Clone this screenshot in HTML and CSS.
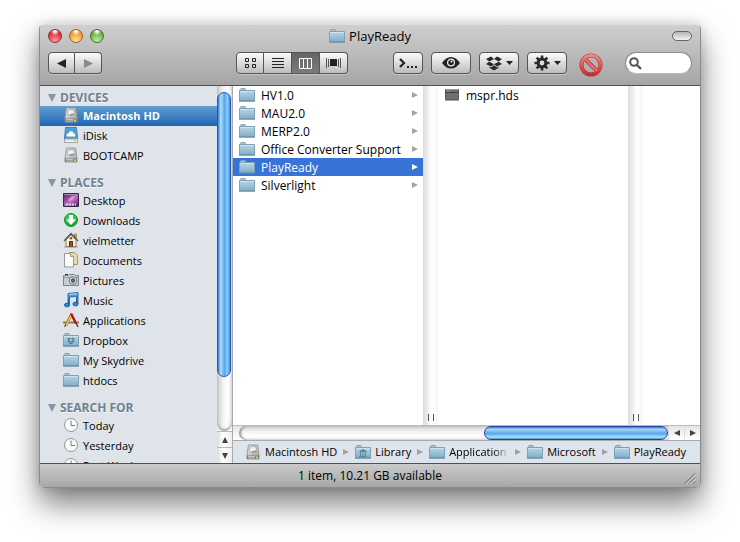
FILE: index.html
```
<!DOCTYPE html>
<html lang="en">
<head>
    <meta charset="UTF-8">
    <meta name="viewport" content="width=device-width, initial-scale=1.0">
    <title>PlayReady</title>
    <link rel="stylesheet" href="styles.css">
</head>
<body>
    <!-- shared icons -->
    <svg class="sprite" aria-hidden="true">
        <defs>
            <linearGradient id="folderFill" x1="0" y1="0" x2="0" y2="1">
                <stop offset="0" stop-color="#bad6e5"/>
                <stop offset="1" stop-color="#80adc6"/>
            </linearGradient>
            <linearGradient id="driveFill" x1="0" y1="0" x2="1" y2="1">
                <stop offset="0" stop-color="#f2f2f2"/>
                <stop offset="1" stop-color="#9b9b9b"/>
            </linearGradient>
            <linearGradient id="deskFill" x1="0" y1="0" x2="1" y2="1">
                <stop offset="0" stop-color="#4a2360"/>
                <stop offset="0.55" stop-color="#c86cc4"/>
                <stop offset="1" stop-color="#43204f"/>
            </linearGradient>
            <linearGradient id="noteFill" x1="0" y1="0" x2="0" y2="1">
                <stop offset="0" stop-color="#56b2f2"/>
                <stop offset="1" stop-color="#1259a8"/>
            </linearGradient>
            <radialGradient id="greenFill" cx="0.5" cy="0.3" r="0.7">
                <stop offset="0" stop-color="#5fe06c"/>
                <stop offset="1" stop-color="#119c2c"/>
            </radialGradient>
            <linearGradient id="redFill" x1="0" y1="0" x2="0" y2="1">
                <stop offset="0" stop-color="#f08a8a"/>
                <stop offset="1" stop-color="#d62a2c"/>
            </linearGradient>
        </defs>
        <symbol id="folder" viewBox="0 0 16 16">
            <path d="M1.500 4V2.500q0-1 1-1h3q1 0 1 1V4z" fill="#a9c9da" stroke="#7d9fb4"/>
            <path d="M.5 3.500h15v10.500H.5z" fill="url(#folderFill)" stroke="#7ba2b9"/>
            <path d="M1 4.500h14" stroke="#cfe3ee"/>
            <path d="M0 14h16" stroke="#5d879f"/>
        </symbol>
        <symbol id="drive" viewBox="0 0 16 16">
            <path d="M3.500 1h9l1.500 10v4H2v-4z" fill="url(#driveFill)" stroke="#9a9a9a"/>
            <path d="M2 11.500h12V15H2z" fill="#7c7c7c"/>
            <ellipse cx="8" cy="5.500" rx="3.800" ry="3.300" fill="#ededed" stroke="#aaa"/>
            <path d="M7 8l4-1" stroke="#777"/>
            <path d="M3 12.500h7M3 14h7" stroke="#c9c9c9"/>
            <path d="M11 13.500h2" stroke="#e3d84d" stroke-width="2"/>
        </symbol>
        <symbol id="idisk" viewBox="0 0 16 16">
            <path d="M2.500.5h11l1 11v4h-13v-4z" fill="#4c9ed5" stroke="#4c7fa6"/>
            <path d="M1.500 12h13v3.500h-13z" fill="#ededed" stroke="#a7a7a7"/>
            <path d="M4 9.500q-1.500-3 1.500-3 .5-3 3.500-2 1.500 0 1.500 2 3 .3 1.500 3z" fill="#fff"/>
            <path d="M11 13.500h2" stroke="#b9c84c"/>
        </symbol>
        <symbol id="desktop" viewBox="0 0 16 16">
            <path d="M.5 1.500h15v13H.5z" fill="url(#deskFill)" stroke="#3b2146"/>
            <path d="M1 2.500h14" stroke="#a98cb2"/>
            <path d="M5 9q2-5 7-5-2 5-7 5" fill="#f5b2ea" opacity=".7"/>
            <path d="M3 12.500h2M6 12.500h2M9 12.500h2M12 12.500h1" stroke="#bfe2fb" stroke-width="2"/>
        </symbol>
        <symbol id="downloads" viewBox="0 0 16 16">
            <circle cx="8" cy="8" r="6.500" fill="url(#greenFill)" stroke="#17902e"/>
            <path d="M6 3h4v4.500h3L8 13 3 7.500h3z" fill="#fff"/>
        </symbol>
        <symbol id="home" viewBox="0 0 16 16">
            <path d="M11.500 2h2v4h-2z" fill="#c79869" stroke="#7c5635" stroke-width=".5"/>
            <path d="M3 8l5-5 5 5v6.500H3z" fill="#f6f1dd" stroke="#8e8468"/>
            <path d="M1 9l7-7.500L15 9" fill="none" stroke="#5d5045" stroke-width="1.200"/>
            <path d="M6.500 9.500h3v5h-3z" fill="#a34a22" stroke="#512b17"/>
            <circle cx="8" cy="6.300" r="1.200" fill="#7a4b32"/>
            <path d="M1.500 15h13" stroke="#848b71"/>
        </symbol>
        <symbol id="documents" viewBox="0 0 16 16">
            <path d="M6.500.5h5l3 3v9h-8z" fill="#e5d9a7" stroke="#a4986e"/>
            <path d="M1.500 1.500h6l3 3v10.500h-9z" fill="#fafafa" stroke="#999"/>
            <path d="M7.500 1.500v3h3" fill="#ddd" stroke="#999"/>
        </symbol>
        <symbol id="pictures" viewBox="0 0 16 16">
            <path d="M.5 3.500h5l1-1h5l1 1h3v10H.5z" fill="#c4ccd2" stroke="#7c868e"/>
            <path d="M1 5.500h14" stroke="#929da5"/>
            <path d="M2 2.500h3" stroke="#333"/>
            <circle cx="10" cy="8.500" r="3.700" fill="#eee" stroke="#6a737b"/>
            <circle cx="10" cy="8.500" r="1.700" fill="#62778c" stroke="#2e3c4a"/>
        </symbol>
        <symbol id="music" viewBox="0 0 16 16">
            <path d="M5 1.500l10-1v11.500h-1.500V4.500l-7 .6V13H5z" fill="url(#noteFill)" stroke="#1a5c9b" stroke-width=".8"/>
            <ellipse cx="4" cy="13" rx="2.600" ry="2" fill="#2f86d2" stroke="#1a5c9b" stroke-width=".8"/>
            <ellipse cx="12.500" cy="12" rx="2.600" ry="2" fill="#2f86d2" stroke="#1a5c9b" stroke-width=".8"/>
            <path d="M6 2.500l8-.7" stroke="#a4d9fa"/>
        </symbol>
        <symbol id="applications" viewBox="0 0 16 16">
            <path d="M0 10.500h16" stroke="#a97746" stroke-width="2"/>
            <path d="M8.500 2L3 13.500" stroke="#8b5d26" stroke-width="2.600"/>
            <path d="M8.500 2.500L3 14" stroke="#f2d24b" stroke-width="1.500"/>
            <path d="M8 1.500l5 10" stroke="#b5121b" stroke-width="2.400"/>
            <path d="M13 11l2 4" stroke="#5a4638" stroke-width="1.500"/>
            <path d="M1 15.500l1-3 1.500 1z" fill="#333"/>
        </symbol>
        <symbol id="boxmark" viewBox="0 0 16 14">
            <path d="M5 0l3 2.500L3.300 5 0 2.600zM11 0l5 2.600L12.700 5 8 2.500zM3.300 5.200L8 7.800 5 10 0 7.600zM12.700 5.200L16 7.600 11 10 8 7.800zM3.300 10.200l1.700.8 3-2.200 3 2.200 1.700-.8v1L8 14l-4.700-2.800z"/>
        </symbol>
        <symbol id="clock" viewBox="0 0 16 16">
            <circle cx="8" cy="8" r="6.500" fill="#fbfbfb" stroke="#969696"/>
            <path d="M8 3.500V8.500h4" fill="none" stroke="#777"/>
        </symbol>
        <symbol id="arrow" viewBox="0 0 6 6">
            <path d="M0 0l6 3-6 3z" fill="currentColor"/>
        </symbol>
    </svg>

    <main class="window">
        <header class="toolbar">
            <div class="titlebar">
                <div class="lights">
                    <button class="light red" aria-label="Close"></button>
                    <button class="light amber" aria-label="Minimize"></button>
                    <button class="light green" aria-label="Zoom"></button>
                </div>
                <h1 class="title"><svg class="icon"><use href="#folder"/></svg>PlayReady</h1>
                <button class="pill" aria-label="Toggle toolbar"></button>
            </div>
            <div class="tools">
                <div class="group nav">
                    <button class="tool" aria-label="Back"><svg width="9" height="9"><path d="M9 0v9L0 4.500z" fill="#222"/></svg></button>
                    <button class="tool" aria-label="Forward"><svg width="9" height="9"><path d="M0 0v9l9-4.500z" fill="#8b8b8b"/></svg></button>
                </div>
                <span class="space wide"></span>
                <div class="group views">
                    <button class="tool" aria-label="Icons"><svg width="12" height="11" fill="none" stroke="#222"><path d="M1.500.5h3v3h-3zM8.500.5h3v3h-3zM1.500 6.500h3v3h-3zM8.500 6.500h3v3h-3z"/></svg></button>
                    <button class="tool" aria-label="List"><svg width="12" height="11" stroke="#222"><path d="M0 .5h12M0 3.500h12M0 6.500h12M0 9.500h12"/></svg></button>
                    <button class="tool on" aria-label="Columns" aria-pressed="true"><svg width="13" height="11" fill="none" stroke="#fff"><path d="M.5.5h12v10H.5zM4.500 0v11M8.500 0v11"/></svg></button>
                    <button class="tool" aria-label="Cover Flow"><svg width="15" height="10"><path d="M4 1h7v7H4z" fill="#222"/><path d="M.5 0v10M2.500 1v8M12.500 1v8M14.500 0v10" stroke="#555"/></svg></button>
                </div>
                <span class="space"></span>
                <div class="actions">
                    <button class="tool terminal" aria-label="Terminal"><svg width="19" height="12"><path d="M1 2l4 4-4 4" fill="none" stroke="#222" stroke-width="2.200"/><path d="M8 9h2v2H8zM12 9h2v2h-2zM16 9h2v2h-2z" fill="#222"/></svg></button>
                    <button class="tool wide" aria-label="Quick Look"><svg width="18" height="12"><path d="M0 6q4-6 9-6t9 6q-4 5.500-9 5.500T0 6z" fill="#222"/><circle cx="9" cy="5.500" r="3.400" fill="none" stroke="#eee" stroke-width="1.200"/><circle cx="9.500" cy="4.500" r="1" fill="#fff"/></svg></button>
                    <button class="tool wide" aria-label="Dropbox"><svg width="16" height="15" fill="#282828"><use href="#boxmark"/></svg><svg width="7" height="4"><path d="M0 0h7L3.500 4z" fill="#222"/></svg></button>
                    <button class="tool wide" aria-label="Action"><svg width="16" height="16" viewBox="-8 -8 16 16"><g fill="none" stroke="#282828"><circle r="3.900" stroke-width="3"/><path d="M0-7.500V-4M0 7.500V4M-7.500 0H-4M7.500 0H4M-5.300-5.300l2.500 2.500M5.300 5.300L2.800 2.800M-5.300 5.300l2.500-2.500M5.300-5.300L2.800-2.800" stroke-width="2.600"/></g></svg><svg width="7" height="4"><path d="M0 0h7L3.500 4z" fill="#222"/></svg></button>
                </div>
                <button class="deny" aria-label="Delete"><svg width="24" height="24"><circle cx="12" cy="12" r="9.500" fill="none" stroke="#a23a3a" stroke-width="4"/><path d="M6 6l12 12" stroke="#a23a3a" stroke-width="4"/><circle cx="12" cy="12" r="9.500" fill="none" stroke="url(#redFill)" stroke-width="2.800"/><path d="M6 6l12 12" stroke="#e96a6b" stroke-width="2.600"/></svg></button>
                <label class="search">
                    <svg width="13" height="13"><circle cx="5" cy="5" r="3.800" fill="none" stroke="#555" stroke-width="2"/><path d="M8 8l4 4" stroke="#555" stroke-width="2.400"/></svg>
                    <input type="text" aria-label="Search">
                </label>
            </div>
        </header>

        <div class="main">
            <nav class="sidebar">
                <section>
                    <button class="heading"><svg width="8" height="8"><path d="M0 0h8L4 8z" fill="#8796a4"/></svg>DEVICES</button>
                    <a class="place selected" href="#"><svg class="icon"><use href="#drive"/></svg>Macintosh HD</a>
                    <a class="place" href="#"><svg class="icon"><use href="#idisk"/></svg>iDisk</a>
                    <a class="place" href="#"><svg class="icon"><use href="#drive"/></svg>BOOTCAMP</a>
                </section>
                <section>
                    <button class="heading"><svg width="8" height="8"><path d="M0 0h8L4 8z" fill="#8796a4"/></svg>PLACES</button>
                    <a class="place" href="#"><svg class="icon"><use href="#desktop"/></svg>Desktop</a>
                    <a class="place" href="#"><svg class="icon"><use href="#downloads"/></svg>Downloads</a>
                    <a class="place" href="#"><svg class="icon"><use href="#home"/></svg>vielmetter</a>
                    <a class="place" href="#"><svg class="icon"><use href="#documents"/></svg>Documents</a>
                    <a class="place" href="#"><svg class="icon"><use href="#pictures"/></svg>Pictures</a>
                    <a class="place" href="#"><svg class="icon"><use href="#music"/></svg>Music</a>
                    <a class="place" href="#"><svg class="icon"><use href="#applications"/></svg>Applications</a>
                    <a class="place" href="#"><svg class="icon" fill="#517f9b"><use href="#folder"/><use href="#boxmark" x="4" y="5" width="8" height="8"/></svg>Dropbox</a>
                    <a class="place" href="#"><svg class="icon"><use href="#folder"/></svg>My Skydrive</a>
                    <a class="place" href="#"><svg class="icon"><use href="#folder"/></svg>htdocs</a>
                </section>
                <section>
                    <button class="heading"><svg width="8" height="8"><path d="M0 0h8L4 8z" fill="#8796a4"/></svg>SEARCH FOR</button>
                    <a class="place" href="#"><svg class="icon"><use href="#clock"/></svg>Today</a>
                    <a class="place" href="#"><svg class="icon"><use href="#clock"/></svg>Yesterday</a>
                    <a class="place" href="#"><svg class="icon"><use href="#clock"/></svg>Past Week</a>
                </section>
            </nav>

            <div class="scroll-y">
                <div class="track"><div class="thumb"></div></div>
                <button class="step" aria-label="Scroll up"><svg width="6" height="6"><path d="M0 6h6L3 0z" fill="#444"/></svg></button>
                <button class="step" aria-label="Scroll down"><svg width="6" height="6"><path d="M0 0h6L3 6z" fill="#444"/></svg></button>
            </div>

            <div class="browser">
                <div class="columns">
                    <div class="column">
                        <a class="file" href="#"><svg class="icon"><use href="#folder"/></svg><span class="name">HV1.0</span><svg class="more"><use href="#arrow"/></svg></a>
                        <a class="file" href="#"><svg class="icon"><use href="#folder"/></svg><span class="name">MAU2.0</span><svg class="more"><use href="#arrow"/></svg></a>
                        <a class="file" href="#"><svg class="icon"><use href="#folder"/></svg><span class="name">MERP2.0</span><svg class="more"><use href="#arrow"/></svg></a>
                        <a class="file" href="#"><svg class="icon"><use href="#folder"/></svg><span class="name">Office Converter Support</span><svg class="more"><use href="#arrow"/></svg></a>
                        <a class="file selected" href="#"><svg class="icon"><use href="#folder"/></svg><span class="name">PlayReady</span><svg class="more"><use href="#arrow"/></svg></a>
                        <a class="file" href="#"><svg class="icon"><use href="#folder"/></svg><span class="name">Silverlight</span><svg class="more"><use href="#arrow"/></svg></a>
                    </div>
                    <div class="divider"></div>
                    <div class="column">
                        <a class="file" href="#"><svg class="icon" viewBox="0 0 16 16"><path d="M1.500 2.500h13v10h-13z" fill="#707070" stroke="#5a5a5a"/><path d="M1 5.500h14" stroke="#404040"/><path d="M2 2.500h12" stroke="#999"/><path d="M3 4h2" stroke="#7bc47b"/><path d="M1 13.500h14" stroke="#aaa"/></svg><span class="name">mspr.hds</span></a>
                    </div>
                    <div class="divider"></div>
                    <div class="rest"></div>
                </div>
                <div class="scroll-x">
                    <div class="track"><div class="thumb"></div></div>
                    <button class="step" aria-label="Scroll left"><svg width="6" height="6"><path d="M6 0v6L0 3z" fill="#444"/></svg></button>
                    <button class="step" aria-label="Scroll right"><svg width="6" height="6"><path d="M0 0v6l6-3z" fill="#444"/></svg></button>
                </div>
                <nav class="path">
                    <a href="#"><svg class="icon"><use href="#drive"/></svg>Macintosh HD</a>
                    <svg class="more"><use href="#arrow"/></svg>
                    <a href="#"><svg class="icon" viewBox="0 0 16 16"><use href="#folder"/><path d="M4.500 7.500l3.500-2 3.500 2zM4 12.500h8M5.500 8v4M8 8v4M10.500 8v4" fill="#5b89a4" stroke="#5b89a4"/></svg>Library</a>
                    <svg class="more"><use href="#arrow"/></svg>
                    <a href="#"><svg class="icon"><use href="#folder"/></svg><span class="cut">Application</span></a>
                    <svg class="more"><use href="#arrow"/></svg>
                    <a href="#"><svg class="icon"><use href="#folder"/></svg>Microsoft</a>
                    <svg class="more"><use href="#arrow"/></svg>
                    <a href="#"><svg class="icon"><use href="#folder"/></svg>PlayReady</a>
                </nav>
            </div>
        </div>

        <footer class="status">
            <span>1 item, 10.21 GB available</span>
            <svg class="grip" width="12" height="12"><path d="M1 11.500L11 1.500M5 11.500l6-6M9 11.500l2-2" stroke="#666"/><path d="M2 12.500l10-10M6 12.500l6-6" stroke="#ddd"/></svg>
        </footer>
    </main>
</body>
</html>
```
FILE: styles.css
```
* {
    box-sizing: border-box;
}
body {
    margin: 0;
    padding: 24px 39px 54px;
    height: 100vh;
    display: flex;
    background: #fff;
    font-family: "Open Sans", "Noto Sans", sans-serif;
    font-size: 11px;
    color: #000;
}
a {
    color: inherit;
    text-decoration: none;
}
button {
    padding: 0;
    border: none;
    background: none;
    font: inherit;
    color: inherit;
}
svg {
    display: block;
    flex: none;
}
.sprite {
    position: absolute;
    width: 0;
    height: 0;
}
.icon {
    width: 16px;
    height: 16px;
}
.window {
    flex: 1;
    min-width: 0;
    display: flex;
    flex-direction: column;
    border: 1px solid #8b8b8b;
    border-top-color: #dedede;
    border-radius: 5px;
    overflow: hidden;
    box-shadow: 0 16px 30px rgba(0, 0, 0, 0.5), 0 0 12px rgba(0, 0, 0, 0.15);
}

/* toolbar */
.toolbar {
    flex: none;
    padding: 0 8px 6px;
    background: linear-gradient(#cfcfcf, #a5a5a5);
    border-bottom: 1px solid #505050;
}
.titlebar {
    display: grid;
    grid-template-columns: 1fr auto 1fr;
    align-items: center;
    height: 22px;
}
.lights {
    display: flex;
    gap: 7px;
}
.light {
    width: 14px;
    height: 14px;
    border-radius: 50%;
    border: 1px solid #555;
}
.red {
    background: radial-gradient(circle at 50% 10%, #fff 5%, transparent 35%), radial-gradient(circle at 50% 90%, #ff9c9c, #e02832 70%);
    border-color: #8b3339;
}
.amber {
    background: radial-gradient(circle at 50% 10%, #fff 5%, transparent 35%), radial-gradient(circle at 50% 90%, #ffe88a, #ee8d2e 75%);
    border-color: #95602f;
}
.green {
    background: radial-gradient(circle at 50% 10%, #fff 5%, transparent 35%), radial-gradient(circle at 50% 90%, #c5f29a, #58a83c 75%);
    border-color: #45702f;
}
.title {
    display: flex;
    align-items: center;
    gap: 4px;
    margin: 0;
    font-size: 13px;
    font-weight: normal;
    line-height: 20px;
}
.pill {
    justify-self: end;
    width: 20px;
    height: 10px;
    border: 1px solid #666;
    border-radius: 5px;
    background: linear-gradient(#b5b5b5, #f5f5f5);
}
.tools {
    display: flex;
    align-items: center;
    height: 32px;
}
.space {
    flex: 1;
}
.space.wide {
    flex: 3;
}
.group {
    display: flex;
}
.tool {
    display: flex;
    align-items: center;
    justify-content: center;
    gap: 4px;
    height: 22px;
    border: 1px solid #555;
    border-radius: 4px;
    background: linear-gradient(#fbfbfb, #bdbdbd);
    box-shadow: 0 1px 0 #c6c6c6;
}
.group .tool {
    width: 28px;
    border-radius: 0;
}
.group .tool + .tool {
    border-left: none;
}
.group .tool:first-child {
    border-radius: 4px 0 0 4px;
}
.group .tool:last-child {
    border-radius: 0 4px 4px 0;
}
.nav .tool {
    width: 27px;
}
.group .on {
    background: linear-gradient(#646464, #7b7b7b);
}
.actions {
    display: flex;
    gap: 8px;
}
.terminal {
    width: 30px;
}
.tool.wide {
    width: 40px;
}
.deny {
    margin: 4px 22px 0 12px;
}
.search {
    display: flex;
    align-items: center;
    width: 67px;
    height: 22px;
    padding: 0 8px 0 3px;
    border: 1px solid #8c8c8c;
    border-radius: 11px;
    border-bottom-color: #bbb;
    background: #fff;
}
.search input {
    flex: 1;
    min-width: 0;
    border: none;
    outline: none;
    background: none;
    font: inherit;
}

/* sidebar */
.main {
    flex: 1;
    min-height: 0;
    display: flex;
}
.sidebar {
    width: 177px;
    flex: none;
    overflow: hidden;
    background: #dee4ea;
}
.sidebar section {
    margin-bottom: 5px;
}
.heading {
    display: flex;
    align-items: center;
    gap: 4px;
    width: 100%;
    height: 20px;
    padding: 3px 8px 0;
    font-size: 12px;
    font-weight: bold;
    color: #718090;
    text-shadow: 0 1px 0 #f5f7f9;
}
.place {
    display: flex;
    align-items: center;
    gap: 4px;
    height: 20px;
    padding: 0 0 2px 23px;
}
.place.selected {
    background: linear-gradient(#629ed4, #1f66b1);
    color: #fff;
    font-weight: bold;
}

/* scrollers */
.scroll-y {
    flex: none;
    width: 16px;
    display: flex;
    flex-direction: column;
    border-right: 1px solid #aaa;
    background: #f5f5f5;
}
.track {
    flex: 1;
    min-width: 0;
    display: flex;
}
.scroll-y .track {
    padding-top: 6px;
    border-radius: 0 0 8px 8px;
    background: linear-gradient(90deg, #c9c9c9, #f2f2f2 40%, #fff 70%, #e6e6e6);
    box-shadow: inset 0 -2px 2px #aaa;
}
.scroll-y .thumb {
    width: 14px;
    height: 84%;
    border: 1px solid #2459b8;
    border-radius: 7px;
    background: linear-gradient(90deg, #2a79dc, #b1dcfb 22%, #83bff2 40%, #57a6eb 55%, #8bcdfa 78%, #4a8bd0);
}
.step {
    display: flex;
    align-items: center;
    justify-content: center;
    width: 16px;
    height: 16px;
}
.scroll-y .step {
    width: 15px;
    border-top: 1px solid #bbb;
    background: linear-gradient(90deg, #ddd, #fff 40%, #eee);
}
.scroll-x {
    flex: none;
    display: flex;
    height: 16px;
    padding-left: 6px;
    border-top: 1px solid #bbb;
    border-bottom: 1px solid #aaa;
    background: linear-gradient(#e5e5e5, #fff);
}
.scroll-x .track {
    justify-content: flex-end;
    border-radius: 8px 0 0 8px;
    background: linear-gradient(#cfcfcf, #f2f2f2 40%, #fff 70%, #eee);
    box-shadow: inset 2px 0 2px #999;
}
.scroll-x .thumb {
    width: 43%;
    border: 1px solid #2043a8;
    border-radius: 7px;
    background: linear-gradient(#377ddc, #a9d3f7 20%, #6fb2ee 45%, #58a9ee 55%, #a6e4ff 85%, #4d94cf);
}
.scroll-x .step {
    height: 14px;
    border-left: 1px solid #ddd;
}

/* columns */
.browser {
    flex: 1;
    min-width: 0;
    display: flex;
    flex-direction: column;
}
.columns {
    flex: 1;
    min-height: 0;
    display: flex;
    background: #fff;
}
.column {
    width: 190px;
    flex: none;
}
.divider {
    flex: none;
    width: 15px;
    display: flex;
    align-items: flex-end;
    justify-content: center;
    padding-bottom: 4px;
    background: linear-gradient(90deg, #dadada, #fbfbfb 50%, #fff 65%, #f6f6f6);
}
.divider::after {
    content: "";
    width: 4px;
    height: 7px;
    border: solid #555;
    border-width: 0 1px;
}
.rest {
    flex: 1;
}
.file {
    display: flex;
    align-items: center;
    gap: 6px;
    height: 18px;
    padding: 0 5px 0 6px;
    font-size: 12px;
}
.file.selected {
    background: #3874d7;
    color: #fff;
}
.name {
    flex: 1;
    white-space: nowrap;
}
.more {
    width: 6px;
    height: 6px;
    color: #a2a2a2;
}
.selected .more {
    color: #fff;
}

/* path and status */
.path {
    flex: none;
    display: flex;
    align-items: center;
    gap: 6px;
    height: 22px;
    padding: 0 0 1px 12px;
    background: #dee4eb;
    white-space: nowrap;
}
.path a {
    display: flex;
    align-items: center;
    gap: 4px;
}
.cut {
    width: 60px;
    -webkit-mask-image: linear-gradient(90deg, #000 75%, transparent);
    mask-image: linear-gradient(90deg, #000 75%, transparent);
}
.status {
    flex: none;
    display: grid;
    grid-template-columns: 1fr auto 1fr;
    align-items: center;
    height: 24px;
    padding: 0 4px;
    border-top: 1px solid #505050;
    background: linear-gradient(#cbcbcb, #a7a7a7);
    font-size: 12px;
}
.status span {
    grid-column: 2;
}
.grip {
    justify-self: end;
    align-self: end;
    margin-bottom: 3px;
}
```
